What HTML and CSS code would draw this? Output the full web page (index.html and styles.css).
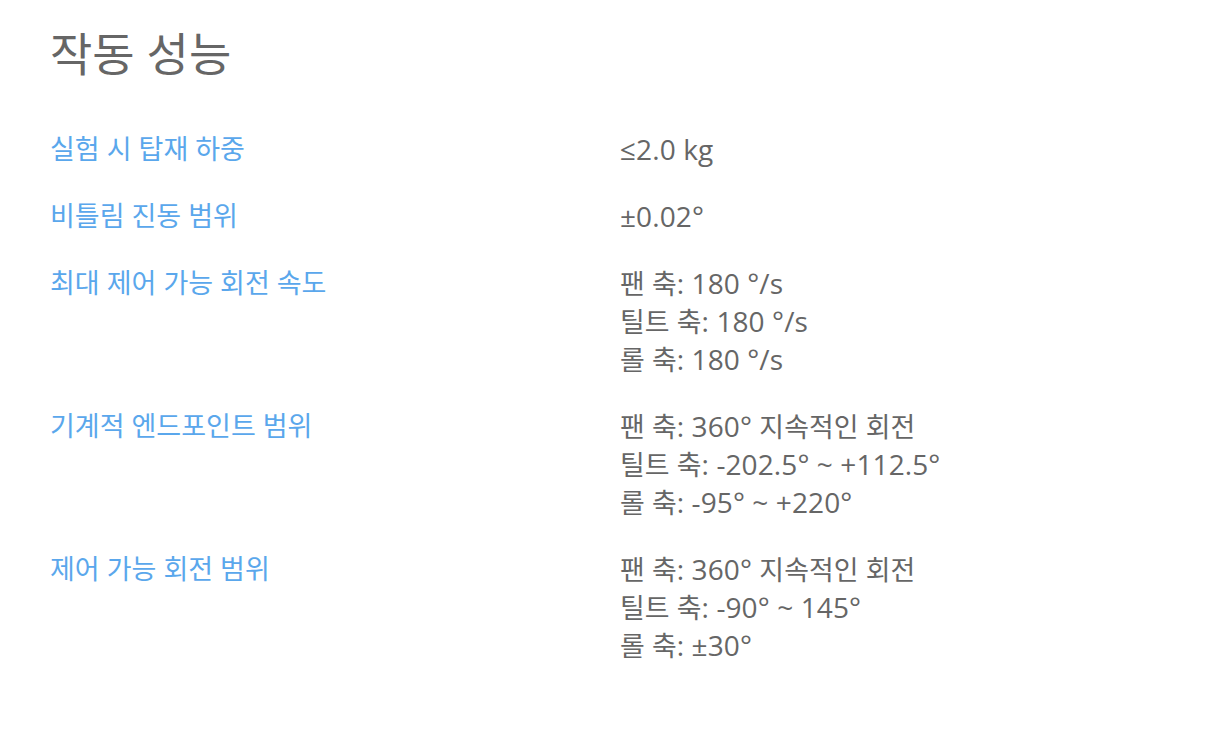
FILE: index.html
```html
<!DOCTYPE html>
<html lang="ko">
<head>
<meta charset="utf-8">
<link rel="stylesheet" href="styles.css">
</head>
<body>
<section class="spec">
  <h2 class="title">작동 성능</h2>
  <dl class="table">
    <dt>실험 시 탑재 하중</dt>
    <dd>≤2.0 kg</dd>
    <dt>비틀림 진동 범위</dt>
    <dd>±0.02°</dd>
    <dt>최대 제어 가능 회전 속도</dt>
    <dd><span class="ko">팬 축</span>: 180 °/s<br><span class="ko">틸트 축</span>: 180 °/s<br><span class="ko">롤 축</span>: 180 °/s</dd>
    <dt>기계적 엔드포인트 범위</dt>
    <dd><span class="ko">팬 축</span>: 360° <span class="ko">지속적인 회전</span><br><span class="ko">틸트 축</span>: -202.5° ~ +112.5°<br><span class="ko">롤 축</span>: -95° ~ +220°</dd>
    <dt>제어 가능 회전 범위</dt>
    <dd><span class="ko">팬 축</span>: 360° <span class="ko">지속적인 회전</span><br><span class="ko">틸트 축</span>: -90° ~ 145°<br><span class="ko">롤 축</span>: ±30°</dd>
  </dl>
</section>
</body>
</html>
```
FILE: styles.css
```css
html, body {
  margin: 0;
  padding: 0;
  background: #ffffff;
}
body {
  font-family: "Open Sans", "Noto Sans CJK KR", sans-serif;
}
.spec {
  padding: 24px 50px 0 50px;
}
.title {
  margin: 0;
  font-size: 46px;
  font-weight: 400;
  line-height: 58px;
  color: #666666;
}
.table {
  display: grid;
  grid-template-columns: 570px 1fr;
  row-gap: 29px;
  margin: 48px 0 0 0;
  line-height: 38px;
}
.table dt {
  color: #5aa7ec;
  font-size: 27px;
  margin: 0;
}
.table dd {
  color: #666666;
  font-size: 28px;
  letter-spacing: 0.1px;
  margin: 0;
}
.ko {
  font-size: 0.96em;
  line-height: 0;
}
```
